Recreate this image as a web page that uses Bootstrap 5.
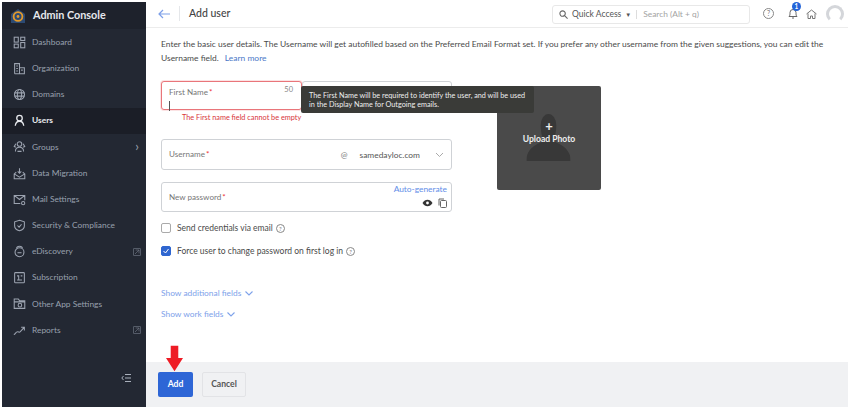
<!DOCTYPE html>
<html lang="en"><head><meta charset="utf-8"><title>Add user</title>
<link href="https://cdn.jsdelivr.net/npm/bootstrap@5.3.0/dist/css/bootstrap.min.css" rel="stylesheet">
<style>
html,body{height:407px;overflow:hidden}
body{font-family:Lato,"Open Sans",sans-serif;font-size:9px;color:#444;background:#fff}
.shell{height:407px;padding-left:2px}
.side{width:144px;flex:none;background:#232833;color:#aab0bd;margin-top:2px;height:405px}
.brand{height:27px;padding-left:8px;gap:7px;color:#e6e8ec;font-size:10.8px;font-weight:700;background:#1e222c}
.mitem{height:26.2px;padding-left:11px;gap:6px;font-size:8.4px;color:#98a0ae}
.mitem svg{width:13px;height:13px;flex:none;stroke:#9ca3b0;fill:none;stroke-width:1.3}
.mitem.on{background:#1b1e27;color:#e8eaee;font-weight:700}
.mitem.on svg{stroke:#e8eaee;stroke-width:1.6}
.mnote{margin-left:auto;margin-right:5px;width:8px!important;height:8px!important;stroke:#6f7684!important;stroke-width:1!important}
.caret{margin-left:auto;margin-right:7px;color:#98a0ae;font-size:13px;line-height:13px}
.collapse-ico{height:26px;margin-top:22px;padding-right:15px}
.mainc{min-width:0}
.topb{height:28px;flex:none;border-bottom:1px solid #ececec;padding-left:12px}
.titl{font-size:10.5px;color:#444;border-left:1px solid #e5e7ea;margin-left:9px;padding-left:9px;height:15px;line-height:15px;font-weight:500}
.qbox{width:198px;height:19px;border:1px solid #e8e8e8;border-radius:3px;margin-left:auto;margin-top:1px;padding-left:6px;font-size:8.5px;color:#555}
.qsep{width:1px;height:9px;background:#ddd;margin:0 9px 0 5px}
.qph{color:#a3a3a3;font-size:8.4px;margin-left:-3px}
.ticons{gap:0;width:98px;padding-left:13px}
.bellw{position:relative;margin-left:14px;margin-right:8px}
.bdg{position:absolute;left:4px;top:-6px;width:9px;height:9px;border-radius:50%;background:#2364d8;color:#fff;font-size:6.5px;font-weight:700;text-align:center;line-height:9px}
.avat{width:18px;height:18px;border-radius:50%;border:3px solid #d4d6da;margin-left:9px;border-bottom-color:transparent}
.bodyw{position:relative;padding:10px 0 0 15px;flex:1 1 auto}
.intro{font-size:8.45px;line-height:13.5px;color:#4a4a4a;white-space:nowrap;margin-bottom:0}
.lnk{color:#4a78c8}
.fieldrow{width:291px;margin-top:16px;gap:0}
.fbox{border:1px solid #cfd2d6;border-radius:3px;position:relative;background:#fff;color:#777;font-size:8.1px}
.fbox.err{border-color:#e9757a;width:141px;height:29px;box-shadow:0 0 0 1px #fbe3e4;padding:4px 7px}
.fbox.oth{flex:1;height:28px;margin-top:0}
.req{color:#e33;margin-left:1px}
.cnt{position:absolute;right:8px;top:2px;font-size:7.5px;color:#888}
.cursor{display:block;width:1px;height:10px;background:#555;margin-top:3px}
.errt{font-size:7.3px;color:#d8363c;margin:3px 0 0 21px;height:10px;line-height:10px}
.ubox{width:291px;height:31px;margin-top:16px;padding:0 7px}
.pbox{width:291px;height:30px;margin-top:12px;padding:8px 7px 0}
.at{margin-left:auto;margin-right:12px;color:#777;padding-top:2px}
.dom{color:#555;font-size:8.4px;margin-right:15px;padding-top:1px}
.autog{position:absolute;right:4px;top:0;color:#5f8ee8;font-size:8.4px}
.picos{position:absolute;right:4px;bottom:3px;gap:5px}
.chk{width:10px;height:10px;border:1px solid #aaa;border-radius:2px;flex:none;margin-right:6px;background:#fff}
.chk.sel{background:#2f66d0;border-color:#2f66d0}
.crow{font-size:8.5px;color:#4a4a4a;height:12px;gap:0}
.crow.one{margin-top:10px}.crow.two{margin-top:11px}
.hlp{width:9px;height:9px;border:1px solid #888;border-radius:50%;font-size:6px;line-height:7px;text-align:center;margin-left:3px;color:#777}
.more{color:#7ea2ea;font-size:8.4px;height:12px;gap:4px}
.more.a{margin-top:30px}.more.b{margin-top:9px}
.tip{position:absolute;left:155px;top:58px;width:233px;height:27px;background:#3a3b38;color:#eee;font-size:7.25px;line-height:9px;padding:5px 8px;border-radius:2px;white-space:nowrap;z-index:2}
.upl{position:absolute;left:351px;top:58px;width:104px;height:104px;background:#4a4a4a;border-radius:2px;color:#eee;overflow:hidden}
.upl svg{position:absolute;left:28px;top:28px}
.uplt{position:absolute;left:0;right:0;top:48px;text-align:center;font-size:8.6px;font-weight:700;line-height:11px}
.plus{position:absolute;left:0;right:0;top:34px;text-align:center;font-size:13px;line-height:13px;font-weight:700}
.foot{height:45px;flex:none;background:#f0f1f3;padding-left:12px;gap:9px;position:relative}
.bt-add{width:35px;height:25px;background:#2e66d6;color:#fff;font-size:8.6px;border-radius:2px;padding:0;font-weight:700;border:0}
.bt-can{width:44px;height:25px;background:#f0f1f3;color:#555;font-size:8.6px;border:1px solid #e2e3e6;border-radius:2px;padding:0;font-weight:700}
.arrow{position:absolute;left:20px;top:-17px}
</style></head><body>
<div class="shell d-flex">
<aside class="side d-flex flex-column">
 <div class="brand d-flex align-items-center">
  <svg width="16" height="16" viewBox="0 0 16 16"><path d="M8 1 15 6V15H1V6Z" fill="#2c4a73"/><circle cx="8" cy="8.5" r="4.4" fill="none" stroke="#e39a2a" stroke-width="1.8"/><circle cx="8" cy="8.5" r="1.4" fill="#e39a2a"/></svg>
  <span>Admin Console</span></div>
 <div class="mitem d-flex align-items-center"><svg viewBox="0 0 16 16"><rect x="1.5" y="1.5" width="5" height="6"/><rect x="9.5" y="1.5" width="5" height="4"/><rect x="1.5" y="10" width="5" height="4.5"/><rect x="9.5" y="8" width="5" height="6.5"/></svg>Dashboard</div>
 <div class="mitem d-flex align-items-center"><svg viewBox="0 0 16 16"><path d="M2 14.5V2h6v12.5M8 7h6v7.5H2M4 5h2M4 8h2M4 11h2M10 10h2"/></svg>Organization</div>
 <div class="mitem d-flex align-items-center"><svg viewBox="0 0 16 16"><circle cx="8" cy="8" r="6.2"/><ellipse cx="8" cy="8" rx="2.6" ry="6.2"/><path d="M2 6h12M2 10h12"/></svg>Domains</div>
 <div class="mitem on d-flex align-items-center"><svg viewBox="0 0 16 16"><circle cx="8" cy="5.2" r="3.4"/><path d="M2.8 14.5c.4-3.6 2.2-5.6 5.2-5.6s4.8 2 5.2 5.6"/></svg>Users</div>
 <div class="mitem d-flex align-items-center"><svg viewBox="0 0 16 16"><circle cx="8" cy="5" r="2.8"/><path d="M3 14c0-3 2-5 5-5s5 2 5 5M3.5 4.5 1.5 8l2 1M12.5 4.5l2 3.5-2 1M5.5 14h5"/></svg>Groups<span class="caret">›</span></div>
 <div class="mitem d-flex align-items-center"><svg viewBox="0 0 16 16"><path d="M4 6.5 1.5 8.5v6h13v-6L12 6.5M1.5 8.5 8 12.5l6.5-4M8 1.5v6M5.8 5.500 8 7.7l2.2-2.2"/></svg>Data Migration</div>
 <div class="mitem d-flex align-items-center"><svg viewBox="0 0 16 16"><path d="M9 13H1.5V3h13v6M1.5 3 8 8l6.5-5"/><circle cx="12.5" cy="12.5" r="2"/></svg>Mail Settings</div>
 <div class="mitem d-flex align-items-center"><svg viewBox="0 0 16 16"><path d="M8 1.5 14 3.5v5c0 3-3 5-6 6-3-1-6-3-6-6v-5ZM5.5 8 7.5 10l3-3.5"/></svg>Security &amp; Compliance</div>
 <div class="mitem d-flex align-items-center"><svg viewBox="0 0 16 16"><path d="M4.5 4a3.5 2.5 0 0 1 7 0"/><circle cx="8" cy="9" r="5.5"/><path d="M5.5 9.5h5"/></svg>eDiscovery<svg class="mnote" viewBox="0 0 12 12"><rect x="1" y="1" width="10" height="10"/><path d="M3 9l6-6M4 3h5v5"/></svg></div>
 <div class="mitem d-flex align-items-center"><svg viewBox="0 0 16 16"><rect x="2" y="2" width="12" height="12.5" rx="1"/><path d="M5 6h2v5M5 11h6M9.5 6h2"/></svg>Subscription</div>
 <div class="mitem d-flex align-items-center"><svg viewBox="0 0 16 16"><path d="M1.5 14V2.500h5l1.5 2h6.500V14ZM1.500 6h13"/><circle cx="8.500" cy="10" r="2.200"/></svg>Other App Settings</div>
 <div class="mitem d-flex align-items-center"><svg viewBox="0 0 16 16"><path d="M1 13c2-.5 2.5-3.500 4.500-3.500S7.500 11 9 9.500l4.500-5M10 4h4v4"/></svg>Reports<svg class="mnote" viewBox="0 0 12 12"><rect x="1" y="1" width="10" height="10"/><path d="M3 9l6-6M4 3h5v5"/></svg></div>
 <div class="collapse-ico d-flex align-items-center justify-content-end"><svg width="10" height="10" viewBox="0 0 10 10" fill="none" stroke="#a9b0bc"><path d="M4 1.500h6M4 5h6M4 8.500h6M2.500 3 .8 5l1.700 2"/></svg></div>
</aside>
<div class="mainc flex-grow-1 d-flex flex-column">
 <header class="topb d-flex align-items-center">
  <svg width="12" height="10" viewBox="0 0 12 10" fill="none" stroke="#7d9fe8" stroke-width="1.200"><path d="M12 5H1M5 1 1 5l4 4"/></svg>
  <span class="titl">Add user</span>
  <div class="qbox d-flex align-items-center">
   <svg width="9" height="9" viewBox="0 0 10 10" fill="none" stroke="#666" stroke-width="1.200" class="me-1"><circle cx="4" cy="4" r="3"/><path d="m6.500 6.500 3 3"/></svg>
   <span>Quick Access</span><span class="ms-1" style="font-size:6px">▼</span><span class="qsep"></span><span class="qph">Search (Alt + q)</span>
  </div>
  <div class="ticons d-flex align-items-center">
   <span class="hlp m-0" style="width:11px;height:11px;line-height:9px;font-size:7px">?</span>
   <span class="bellw d-inline-flex"><svg width="10" height="11" viewBox="0 0 10 11" fill="none" stroke="#666"><path d="M1 8.500c1-1 1-2 1-4a3 3 0 0 1 6 0c0 2 0 3 1 4ZM4 10h2"/></svg><span class="bdg">1</span></span>
   <svg width="11" height="10" viewBox="0 0 11 10" fill="none" stroke="#777"><path d="M.5 5 5.500 1l5 4M2 4.500V9.500h2.500V7h2v2.500H9V4.500"/></svg>
   <span class="avat"></span>
  </div>
 </header>
 <main class="bodyw">
  <p class="intro">Enter the basic user details. The Username will get autofilled based on the Preferred Email Format set. If you prefer any other username from the given suggestions, you can edit the<br>Username field. <span class="lnk ms-1">Learn more</span></p>
  <div class="fieldrow d-flex">
   <div class="fbox err">First Name<span class="req">*</span><span class="cnt">50</span><span class="cursor"></span></div>
   <div class="fbox oth"></div>
  </div>
  <div class="errt">The First name field cannot be empty</div>
  <div class="fbox ubox d-flex align-items-center"><span>Username<span class="req">*</span></span><span class="at">@</span><span class="dom">samedayloc.com</span>
   <svg width="9" height="6" viewBox="0 0 9 6" fill="none" stroke="#aaa"><path d="m1 1 3.500 3.500L8 1"/></svg></div>
  <div class="fbox pbox">New password<span class="req">*</span><span class="autog">Auto-generate</span>
   <span class="picos d-flex align-items-center">
    <svg width="11" height="8" viewBox="0 0 11 8"><path d="M.5 4C2 1.500 3.500.8 5.500.8S9 1.500 10.500 4C9 6.500 7.500 7.200 5.500 7.200S2 6.500.5 4Z" fill="#333"/><circle cx="5.500" cy="4" r="1.400" fill="#fff"/></svg>
    <svg width="9" height="10" viewBox="0 0 9 10" fill="none" stroke="#666"><rect x="2.500" y="2.500" width="6" height="7" rx="1"/><path d="M1 7.500V1h5"/></svg></span></div>
  <div class="crow one d-flex align-items-center"><span class="chk"></span>Send credentials via email<span class="hlp">?</span></div>
  <div class="crow two d-flex align-items-center"><span class="chk sel d-flex"><svg width="8" height="8" viewBox="0 0 8 8" fill="none" stroke="#fff"><path d="m1.500 4 2 2 3-4"/></svg></span>Force user to change password on first log in<span class="hlp">?</span></div>
  <div class="more a d-flex align-items-center">Show additional fields <svg width="8" height="5" viewBox="0 0 8 5" fill="none" stroke="#7ea2ea" stroke-width="1.100"><path d="m.5.500 3.500 3.500L7.500.500"/></svg></div>
  <div class="more b d-flex align-items-center">Show work fields <svg width="8" height="5" viewBox="0 0 8 5" fill="none" stroke="#7ea2ea" stroke-width="1.100"><path d="m.5.500 3.500 3.500L7.500.500"/></svg></div>
  <div class="upl"><svg width="47" height="47" viewBox="0 0 57 49" preserveAspectRatio="none" fill="#383838"><path d="M19 12a9.500 12 0 0 1 19 0c0 7-2 12-3 15 2 4 14 4 19 15 1 2 1 5 1 7H2c0-2 0-5 1-7 5-11 17-11 19-15-1-3-3-8-3-15Z"/></svg><div class="plus">+</div><div class="uplt">Upload Photo</div></div>
  <div class="tip">The First Name will be required to identify the user, and will be used<br>in the Display Name for Outgoing emails.</div>
 </main>
 <footer class="foot d-flex align-items-center">
  <svg class="arrow" width="17" height="27" viewBox="0 0 18 27"><path d="M5 0h8v13h5L9 27 0 13h5Z" fill="#ee1c25"/></svg>
  <button class="btn bt-add" type="button">Add</button><button class="btn bt-can" type="button">Cancel</button>
 </footer>
</div>
</div>
<script src="https://cdn.jsdelivr.net/npm/bootstrap@5.3.0/dist/js/bootstrap.bundle.min.js"></script>
</body></html>
